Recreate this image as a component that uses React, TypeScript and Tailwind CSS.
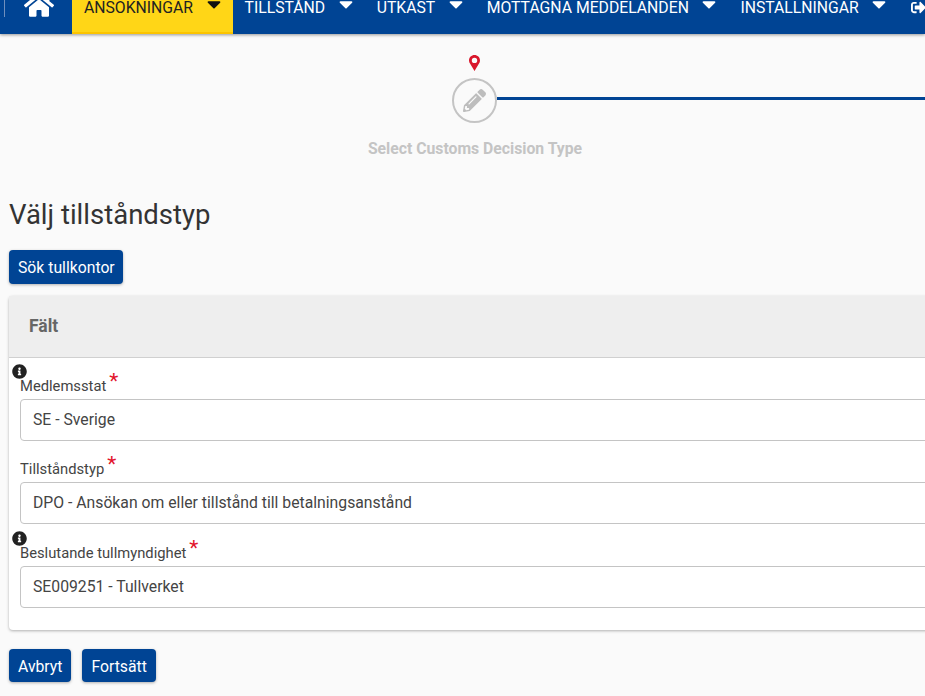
import { FaCaretDown, FaHome, FaInfoCircle, FaPencilAlt, FaSignOutAlt } from "react-icons/fa";

const navItems = [
  { label: "ANSÖKNINGAR", active: true },
  { label: "TILLSTÅND" },
  { label: "UTKAST" },
  { label: "MOTTAGNA MEDDELANDEN" },
  { label: "INSTÄLLNINGAR" },
];

const BlueButton = ({ label, className = "" }: { label: string; className?: string }) => (
  <button className={`h-[33.5px] whitespace-nowrap rounded-[4px] bg-[#004494] px-[9px] pt-px text-[15.75px] leading-[33px] text-white shadow-[0_1px_3px_rgba(0,0,0,0.3)] ${className}`}>
    {label}
  </button>
);

const Field = ({ label, value, info, className }: { label: string; value: string; info?: boolean; className: string }) => (
  <div className={`relative ${className}`}>
    {info ? <FaInfoCircle size={15} className="absolute left-[3px] top-[-12px] text-[#222]" /> : null}
    <label className="flex h-[23px] items-end pb-[4px] pl-[11px] text-[14.75px] leading-[18px] text-[#444]">
      {label}
      <span className="relative top-[-5px] ml-[3px] text-[21px] leading-[18px] text-[#e2142d]">*</span>
    </label>
    <div className="ml-[11px] flex h-[42px] items-center rounded-[4px] border border-[#c4c4c4] bg-white pl-[12px] text-[15.75px] text-[#444]">
      {value}
    </div>
  </div>
);

export default function App() {
  return (
    <div className="h-[696px] w-[925px] overflow-hidden bg-[#fafafa] font-['Roboto',sans-serif]">
      <nav className="flex h-[34px] w-[925px] overflow-hidden bg-[#004494] shadow-[0_1px_3px_rgba(0,0,0,0.4)]">
        <div className="ml-[4px] h-[17px] w-px shrink-0 bg-[#6f8fbd]" />
        <FaHome size={30} className="ml-[19px] mr-[18px] mt-[-10px] shrink-0 text-white" />
        {navItems.map((item) => (
          <div
            key={item.label}
            className={`flex h-[34px] shrink-0 px-3 text-[15.75px] leading-[15px] ${item.active ? "border-b-[2px] border-[#fcc400] bg-[#ffd617] text-[#222]" : "text-white"}`}
          >
            <span className="whitespace-nowrap">{item.label}</span>
            <FaCaretDown size={22} className={`ml-[9.5px] mr-[-4px] mt-[-7px] shrink-0 ${item.active ? "text-[#111]" : "text-white"}`} />
          </div>
        ))}
        <FaSignOutAlt size={15} className="ml-[13px] shrink-0 text-white" />
      </nav>

      <div className="flex w-[949px] items-start pt-[21px]">
        <div className="h-[3px] flex-1" />
        <div className="flex w-[45px] flex-col items-center">
          <svg width="11" height="16" viewBox="0 0 11 16" className="text-[#d9172c]">
            <path
              fill="currentColor"
              fillRule="evenodd"
              d="M5.5 0C2.5 0 0 2.4 0 5.4c0 1.2.4 2.2 1 3.2L5.5 16 10 8.6c.6-1 1-2 1-3.2C11 2.4 8.5 0 5.5 0zm0 2.7a2.7 2.7 0 1 1 0 5.4 2.7 2.7 0 0 1 0-5.4z"
            />
          </svg>
          <div className="mt-[7px] flex h-[45px] w-[45px] items-center justify-center rounded-full border-2 border-[#c4c4c4]">
            <FaPencilAlt size={23} className="text-[#bdbdbd]" />
          </div>
        </div>
        <div className="mt-[42px] h-[3px] flex-1 bg-[#004494]" />
      </div>
      <p className="mt-[16px] w-[950px] text-center text-[15.75px] font-bold leading-[20px] text-[#c4c4c4]">Select Customs Decision Type</p>

      <div className="pl-[9px]">
        <h1 className="mt-[36px] text-[27.5px] leading-[40px] text-[#333]">Välj tillståndstyp</h1>
        <div className="mt-[15px] h-[33.5px]">
          <BlueButton label="Sök tullkontor" className="w-[114px]" />
        </div>
        <section className="mt-[12px] w-[1000px] rounded-[4px] bg-white shadow-[0_1px_3px_rgba(0,0,0,0.3)]">
          <header className="flex h-[62px] items-center border-b border-[#d0d0d0] bg-[#eeeeee] pl-[20px] text-[17.5px] font-bold text-[#666]">
            Fält
          </header>
          <div className="pb-[22px] pt-[18px]">
            <Field label="Medlemsstat" value="SE - Sverige" info className="mt-0" />
            <Field label="Tillståndstyp" value="DPO - Ansökan om eller tillstånd till betalningsanstånd" className="mt-[18px]" />
            <Field label="Beslutande tullmyndighet" value="SE009251 - Tullverket" info className="mt-[19px]" />
          </div>
        </section>
        <div className="mt-[19px] flex gap-[11px]">
          <BlueButton label="Avbryt" />
          <BlueButton label="Fortsätt" />
        </div>
      </div>
    </div>
  );
}
